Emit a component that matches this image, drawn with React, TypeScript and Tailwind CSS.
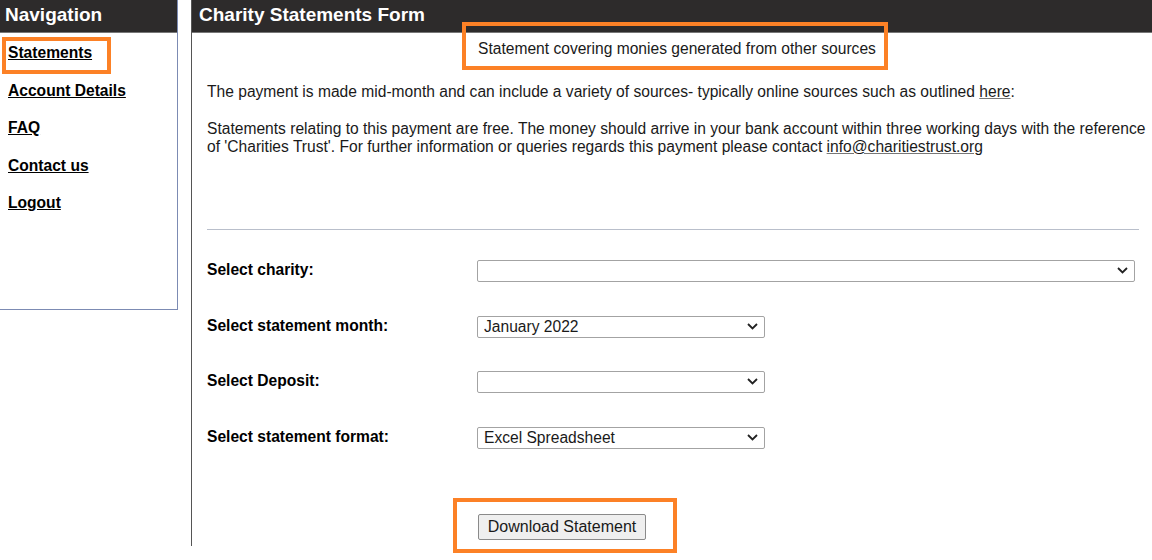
import React from "react";

const NAV_LINKS = ["Statements", "Account Details", "FAQ", "Contact us", "Logout"];

const FORM_ROWS = [
    { label: "Select charity:", value: "", wide: true },
    { label: "Select statement month:", value: "January 2022", wide: false },
    { label: "Select Deposit:", value: "", wide: false },
    { label: "Select statement format:", value: "Excel Spreadsheet", wide: false },
];

function Chevron() {
    return (
        <svg className="pointer-events-none absolute right-[7px] top-[8px]" width="11" height="7" viewBox="0 0 11 7" fill="none">
            <path d="M1 1L5.5 5.5L10 1" stroke="#222" strokeWidth="1.8" />
        </svg>
    );
}

function SelectBox({ value, wide }: { value: string; wide: boolean }) {
    return (
        <div className={`relative h-[22px] ${wide ? "w-[658px]" : "w-[288px]"}`}>
            <select
                defaultValue={value}
                className="h-full w-full appearance-none rounded-[2px] border border-[#a3a3a3] bg-white pl-[6px] text-[15.6px] leading-[20px] text-[#1a1a1a] outline-none"
            >
                <option value={value}>{value}</option>
            </select>
            <Chevron />
        </div>
    );
}

// Orange annotation rectangles drawn over the screenshot
function Marker({ className }: { className: string }) {
    return <div className={`pointer-events-none absolute border-[4px] border-[#fc8126] ${className}`} />;
}

export default function App() {
    return (
        <div
            className="relative flex h-[560px] w-[1152px] overflow-hidden bg-white text-[#1a1a1a]"
            style={{ fontFamily: '"Liberation Sans", Arial, sans-serif' }}
        >
            {/* Sidebar */}
            <div className="h-[310px] w-[178px] shrink-0 border-b border-r border-[#7c8bb3]">
                <div className="h-[33px] border-b border-[#777] bg-[#2d2b2b] pl-[5px] text-[19px] font-bold leading-[30px] text-white">
                    Navigation
                </div>
                <ul className="flex flex-col gap-[19.6px] pl-[8px] pt-[11px]">
                    {NAV_LINKS.map((link) => (
                        <li key={link} className="text-[15.6px] font-bold leading-[18px]">
                            <a href="#" className="text-black underline">{link}</a>
                        </li>
                    ))}
                </ul>
            </div>

            {/* Main form */}
            <div className="ml-[13px] flex h-[546px] flex-1 flex-col border-l border-[#555]">
                <div className="h-[33px] border-b border-[#777] bg-[#2d2b2b] pl-[7px] text-[19px] font-bold leading-[30px] text-white">
                    Charity Statements Form
                </div>
                <div className="flex flex-col pl-[15px] pr-[2px]">
                    <p className="mt-[7px] pl-[271px] text-[15.6px] leading-[18px]">
                        Statement covering monies generated from other sources
                    </p>
                    <p className="mt-[25px] text-[15.6px] leading-[18px]">
                        The payment is made mid-month and can include a variety of sources- typically online sources such as outlined{" "}
                        <a href="#" className="underline decoration-[#777]">here</a>:
                    </p>
                    <p className="mt-[19px] text-[15.6px] leading-[18px]">
                        Statements relating to this payment are free. The money should arrive in your bank account within three working days with the reference of 'Charities Trust'. For further information or queries regards this payment please contact{" "}
                        <a href="#" className="underline decoration-[#777]">info@charitiestrust.org</a>
                    </p>
                    <hr className="mr-[11px] mt-[73px] border-t border-[#b9bfcb]" />

                    <div className="mt-[29px] flex flex-col gap-[33.6px]">
                        {FORM_ROWS.map((row) => (
                            <div key={row.label} className="flex h-[22px] items-center">
                                <div className="w-[270px] text-[15.6px] font-bold leading-[18px] text-black">{row.label}</div>
                                <SelectBox value={row.value} wide={row.wide} />
                            </div>
                        ))}
                    </div>

                    <div className="mt-[66px] pl-[271px]">
                        <button className="h-[26px] w-[168px] rounded-[2px] border border-[#8a8a8a] bg-[#efefef] text-[16px] leading-[20px] text-[#1a1a1a]">
                            Download Statement
                        </button>
                    </div>
                </div>
            </div>

            <Marker className="left-[2px] top-[37px] h-[37px] w-[109px]" />
            <Marker className="left-[462px] top-[22px] h-[48px] w-[426px]" />
            <Marker className="left-[453px] top-[498px] h-[55px] w-[224px]" />
        </div>
    );
}
